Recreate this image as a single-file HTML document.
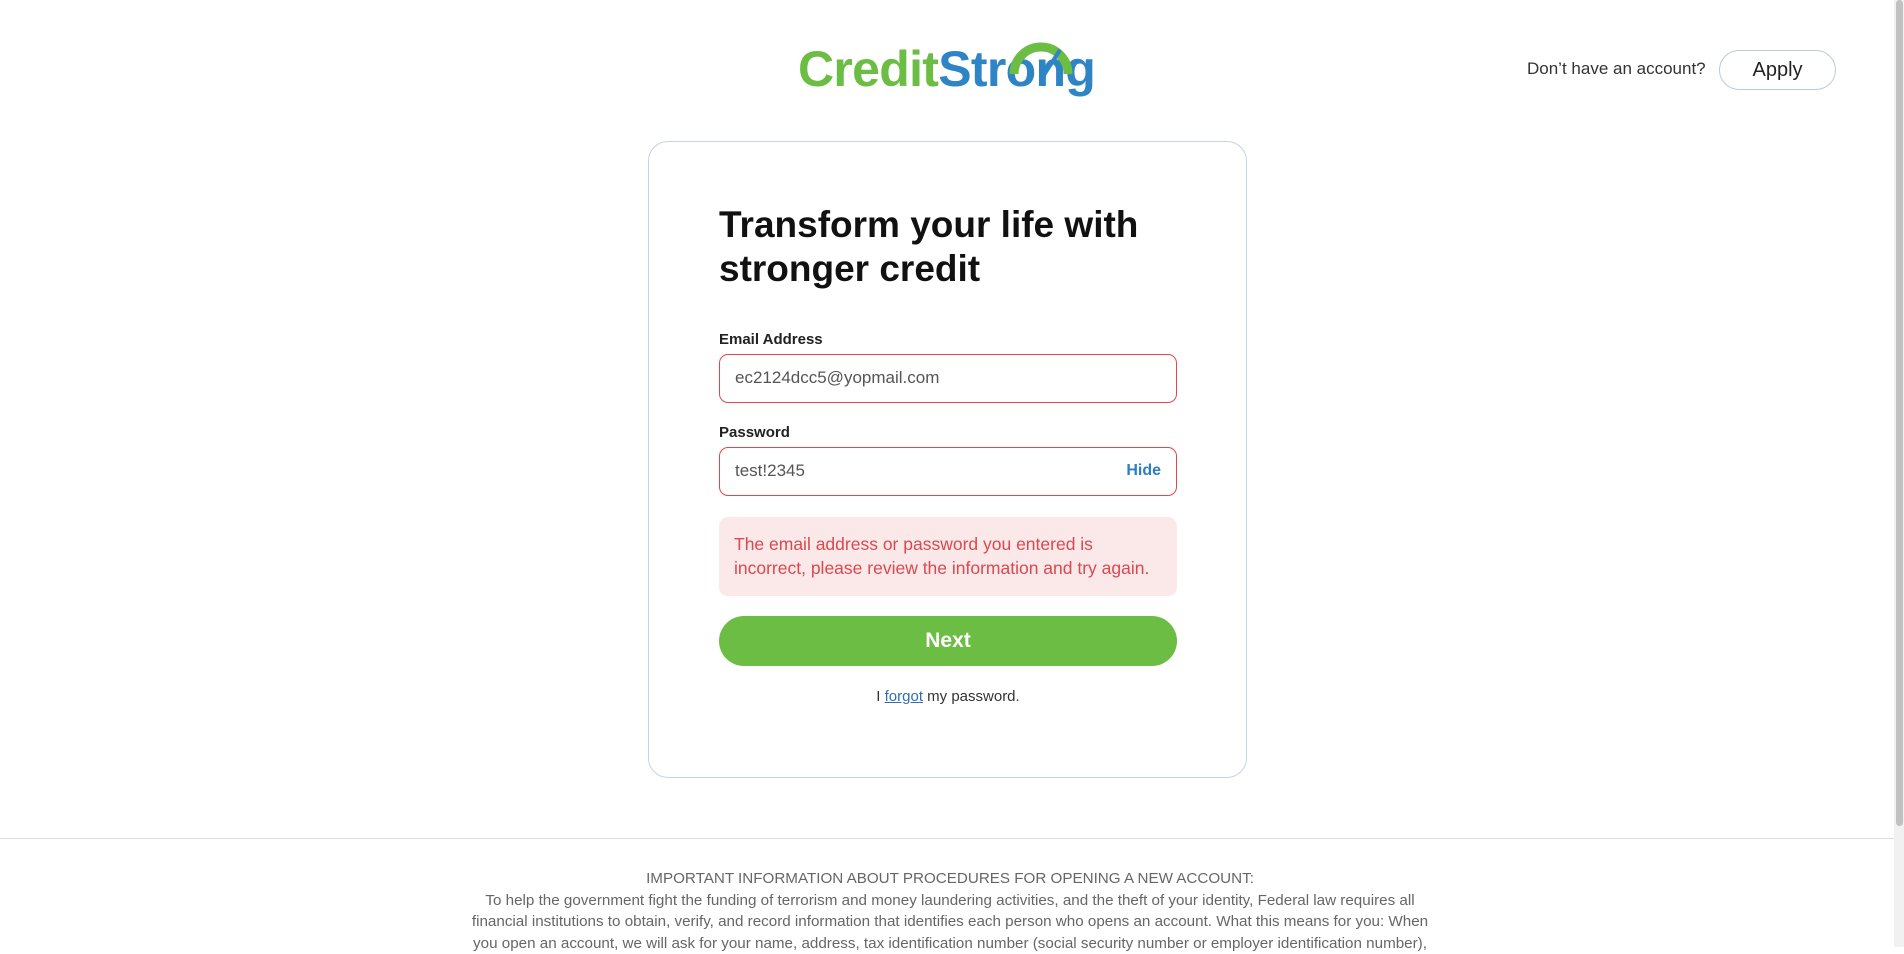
<!DOCTYPE html>
<html><head><meta charset="utf-8"><style>
*{box-sizing:border-box;margin:0;padding:0}
html,body{width:1904px;height:947px;overflow:hidden;background:#fff;font-family:"Liberation Sans",sans-serif;color:#333}
.abs{position:absolute}
.logo{left:798px;top:37px;font-size:50px;font-weight:bold;letter-spacing:-0.7px;line-height:64px}
.card{left:648px;top:141px;width:599px;height:637px;border:1px solid #c5d3e2;border-radius:20px}
h1{position:absolute;left:719px;top:203px;font-size:37px;line-height:44px;color:#111;font-weight:bold}
.lbl{font-size:15px;font-weight:bold;color:#222;left:719px}
.inp{left:719px;width:458px;height:49px;border:1.5px solid #e04848;border-radius:9px;font-size:17px;color:#555;padding-left:15px;line-height:46px}
.err{left:719px;top:517px;width:458px;height:79px;background:#fbe8e8;border-radius:9px;color:#d9494f;font-size:17.5px;line-height:24px;padding:15px 0 0 15px}
.btn{left:719px;top:616px;width:458px;height:50px;background:#6bbd43;border-radius:25px;color:#fff;font-size:21px;font-weight:bold;text-align:center;line-height:50px}
.foot{left:400px;width:1100px;text-align:center;font-size:15.2px;color:#666;line-height:21.5px;white-space:nowrap}
</style></head><body>
<div class="abs logo"><span style="color:#6bbd43">Credit</span><span style="color:#2f84c6">Strong</span></div>
<svg class="abs" style="left:1006px;top:38px" width="70" height="40" viewBox="0 0 70 40"><path d="M8 36 A27 27 0 0 1 62 36" fill="none" stroke="#6bbd43" stroke-width="9"/><path d="M54 12 L36 40" stroke="#2f84c6" stroke-width="4"/></svg>
<div class="abs" style="left:1527px;top:59px;font-size:17px;color:#333">Don’t have an account?</div>
<div class="abs" style="left:1719px;top:50px;width:117px;height:40px;border:1px solid #bcc9d6;border-radius:20px;text-align:center;line-height:38px;font-size:20px;color:#222">Apply</div>
<div class="abs card"></div>
<h1>Transform your life with<br>stronger credit</h1>
<div class="abs lbl" style="top:331px">Email Address</div>
<div class="abs inp" style="top:354px">ec2124dcc5@yopmail.com</div>
<div class="abs lbl" style="top:424px">Password</div>
<div class="abs inp" style="top:447px">test!2345<span style="position:absolute;right:15px;color:#2f7ec1;font-weight:bold;font-size:16px">Hide</span></div>
<div class="abs err">The email address or password you entered is<br>incorrect, please review the information and try again.</div>
<div class="abs btn">Next</div>
<div class="abs" style="left:719px;width:458px;top:688px;text-align:center;font-size:15px;color:#333">I <span style="color:#2f6fb0;text-decoration:underline">forgot</span> my password.</div>
<div class="abs" style="left:0;top:838px;width:1894px;height:1px;background:#ddd"></div>
<div class="abs foot" style="top:868px">IMPORTANT INFORMATION ABOUT PROCEDURES FOR OPENING A NEW ACCOUNT:<br>To help the government fight the funding of terrorism and money laundering activities, and the theft of your identity, Federal law requires all<br>financial institutions to obtain, verify, and record information that identifies each person who opens an account. What this means for you: When<br>you open an account, we will ask for your name, address, tax identification number (social security number or employer identification number),</div>
<div class="abs" style="left:1894px;top:0;width:10px;height:947px;background:#f1f1f1"></div>
<div class="abs" style="left:1896px;top:0;width:7px;height:826px;background:#c1c1c1;border-radius:4px"></div>
</body></html>
